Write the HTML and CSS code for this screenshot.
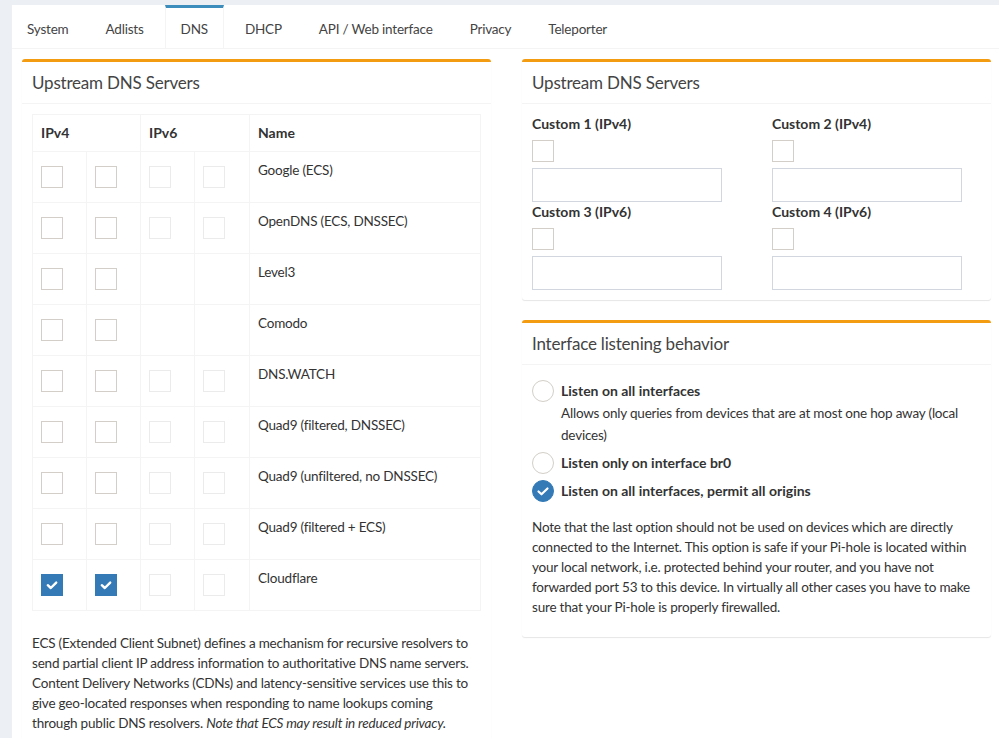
FILE: index.html
```html
<!DOCTYPE html>
<html lang="en">
<head>
  <meta charset="UTF-8">
  <title>Settings - DNS</title>
  <link rel="stylesheet" href="styles.css">
</head>
<body>

  <div class="tabs-custom">
    <ul class="tabs">
      <li><a>System</a></li>
      <li><a>Adlists</a></li>
      <li class="active"><a>DNS</a></li>
      <li><a>DHCP</a></li>
      <li><a>API / Web interface</a></li>
      <li><a>Privacy</a></li>
      <li><a>Teleporter</a></li>
    </ul>

    <div class="tab-pane">
      <div class="col">
        <div class="box">
          <div class="box-header"><h3>Upstream DNS Servers</h3></div>
          <div class="box-body">
            <table class="dns-table">
              <colgroup>
                <col class="c-box"><col class="c-box"><col class="c-box"><col class="c-box c-last"><col>
              </colgroup>
              <thead>
                <tr><th colspan="2">IPv4</th><th colspan="2">IPv6</th><th>Name</th></tr>
              </thead>
              <tbody id="servers"></tbody>
            </table>
            <p class="help">ECS (Extended Client Subnet) defines a mechanism for recursive resolvers to send partial client IP address information to authoritative DNS name servers. Content Delivery Networks (CDNs) and latency-sensitive services use this to give geo-located responses when responding to name lookups coming through public DNS resolvers. <em>Note that ECS may result in reduced privacy.</em></p>
          </div>
        </div>
      </div>

      <div class="col">
        <div class="box">
          <div class="box-header"><h3>Upstream DNS Servers</h3></div>
          <div class="box-body">
            <div class="custom-grid">
              <div class="custom">
                <label>Custom 1 (IPv4)</label>
                <span class="check"></span>
                <input type="text">
              </div>
              <div class="custom">
                <label>Custom 2 (IPv4)</label>
                <span class="check"></span>
                <input type="text">
              </div>
              <div class="custom">
                <label>Custom 3 (IPv6)</label>
                <span class="check"></span>
                <input type="text">
              </div>
              <div class="custom">
                <label>Custom 4 (IPv6)</label>
                <span class="check"></span>
                <input type="text">
              </div>
            </div>
          </div>
        </div>

        <div class="box">
          <div class="box-header"><h3>Interface listening behavior</h3></div>
          <div class="box-body">
            <div class="radio first">
              <span class="radio-btn"></span>
              <label>Listen on all interfaces</label>
            </div>
            <p class="radio-desc">Allows only queries from devices that are at most one hop away (local devices)</p>
            <div class="radio">
              <span class="radio-btn"></span>
              <label>Listen only on interface br0</label>
            </div>
            <div class="radio">
              <span class="radio-btn checked">
                <svg width="22" height="22" viewBox="0 0 22 22"><polyline points="6.5,11.5 9.5,14.3 15.5,8.5" fill="none" stroke="#fff" stroke-width="2.2" stroke-linecap="round" stroke-linejoin="round"/></svg>
              </span>
              <label>Listen on all interfaces, permit all origins</label>
            </div>
            <p class="note">Note that the last option should not be used on devices which are directly connected to the Internet. This option is safe if your Pi-hole is located within your local network, i.e. protected behind your router, and you have not forwarded port 53 to this device. In virtually all other cases you have to make sure that your Pi-hole is properly firewalled.</p>
          </div>
        </div>
      </div>
    </div>
  </div>

  <script>
    const servers = [
      { name: 'Google (ECS)', v6: true },
      { name: 'OpenDNS (ECS, DNSSEC)', v6: true },
      { name: 'Level3', v6: false },
      { name: 'Comodo', v6: false },
      { name: 'DNS.WATCH', v6: true },
      { name: 'Quad9 (filtered, DNSSEC)', v6: true },
      { name: 'Quad9 (unfiltered, no DNSSEC)', v6: true },
      { name: 'Quad9 (filtered + ECS)', v6: true },
      { name: 'Cloudflare', v6: true, on: true }
    ];

    const tick = '<svg width="22" height="22" viewBox="0 0 22 22"><polyline points="6.8,11.2 9.8,14 15.2,8.6" fill="none" stroke="#fff" stroke-width="2.4" stroke-linecap="round" stroke-linejoin="round"/></svg>';

    function cell(cls, inner) {
      return `<td class="box-cell"><span class="check ${cls}">${inner || ''}</span></td>`;
    }

    const body = document.getElementById('servers');
    servers.forEach(s => {
      const tr = document.createElement('tr');
      let html = '';
      html += cell(s.on ? 'checked' : '', s.on ? tick : '');
      html += cell(s.on ? 'checked' : '', s.on ? tick : '');
      if (s.v6) {
        html += cell('disabled') + cell('disabled');
      } else {
        html += '<td class="box-cell"></td><td class="box-cell"></td>';
      }
      html += `<td class="name">${s.name}</td>`;
      tr.innerHTML = html;
      body.appendChild(tr);
    });
  </script>
</body>
</html>
```

FILE: styles.css
```css
body {
  margin: 0;
  padding: 5px 0 0 12px;
  background: #ecf0f5;
  font-family: Lato, "Liberation Sans", sans-serif;
  font-size: 13.5px;
  letter-spacing: -0.2px;
  line-height: 20px;
  color: #333;
  overflow: hidden;
}
.tabs-custom {
  background: #fff;
  min-height: 733px;
  width: 1000px;
}
.tabs {
  list-style: none;
  margin: 0;
  padding: 0;
  display: flex;
  border-bottom: 1px solid #f4f4f4;
}
.tabs li {
  margin-right: 5px;
}
.tabs li a {
  display: block;
  padding: 11px 15px 9px;
  border-top: 3px solid transparent;
  border-left: 1px solid transparent;
  border-right: 1px solid transparent;
  color: #444;
}
.tabs li:first-child a {
  border-left: none;
}
.tabs li.active a {
  border-top-color: #3c8dbc;
  border-left-color: #f4f4f4;
  border-right-color: #f4f4f4;
}
.tab-pane {
  padding: 10px;
  display: grid;
  grid-template-columns: 469px 469px;
  column-gap: 31px;
  align-items: start;
}
.box {
  border-top: 3px solid #f39c12;
  border-radius: 3px;
  box-shadow: 0 1px 1px rgba(0, 0, 0, 0.1);
  margin-bottom: 20px;
  background: #fff;
}
.box-header {
  padding: 10px;
  border-bottom: 1px solid #f4f4f4;
}
.box-header h3 {
  margin: 0;
  font-size: 17px;
  font-weight: normal;
  line-height: 21px;
  color: #444;
}
.box-body {
  padding: 10px;
}

/* server table */
.dns-table {
  width: 100%;
  border-collapse: collapse;
  border: 1px solid #f4f4f4;
  margin-bottom: 20px;
}
.dns-table .c-box {
  width: 54px;
}
.dns-table .c-last {
  width: 55px;
}
.dns-table th,
.dns-table td {
  border: 1px solid #f4f4f4;
  padding: 8px;
  text-align: left;
  vertical-align: top;
}
.dns-table th {
  font-weight: bold;
  font-size: 14px;
  letter-spacing: 0;
  color: #333;
}
.box-cell .check {
  margin: 6px 0;
}
.check {
  display: block;
  width: 22px;
  height: 22px;
  box-sizing: border-box;
  border: 1px solid #d3cfc8;
  background: #fff;
}
.check.disabled {
  border-color: #ebebeb;
}
.check.checked {
  background: #337ab7;
  border-color: #337ab7;
}
.check.checked svg {
  display: block;
  margin: -1px;
}
.help {
  margin: 22px 0 0;
}

/* custom servers */
.custom-grid {
  display: grid;
  grid-template-columns: 240px 1fr;
}
.custom label {
  display: block;
  font-weight: bold;
  font-size: 14px;
  letter-spacing: 0;
}
.custom .check {
  margin: 6px 0;
}
.custom input {
  display: block;
  width: 190px;
  height: 34px;
  box-sizing: border-box;
  border: 1px solid #d2d6de;
  margin: 0;
  padding: 6px 12px;
}

/* interface radios */
.radio {
  display: flex;
  align-items: center;
  gap: 7px;
  margin-top: 6px;
}
.radio.first {
  margin-top: 5px;
}
.radio label {
  font-weight: bold;
  font-size: 14px;
  letter-spacing: 0;
}
.radio-btn {
  width: 22px;
  height: 22px;
  box-sizing: border-box;
  border: 1px solid #d3cfc8;
  border-radius: 50%;
  flex-shrink: 0;
}
.radio-btn.checked {
  background: #337ab7;
  border-color: #337ab7;
}
.radio-btn.checked svg {
  display: block;
  margin: -1px;
}
.radio-desc {
  margin: 0 0 0 29px;
  line-height: 22px;
}
.note {
  margin: 15px 0 10px;
}
```
